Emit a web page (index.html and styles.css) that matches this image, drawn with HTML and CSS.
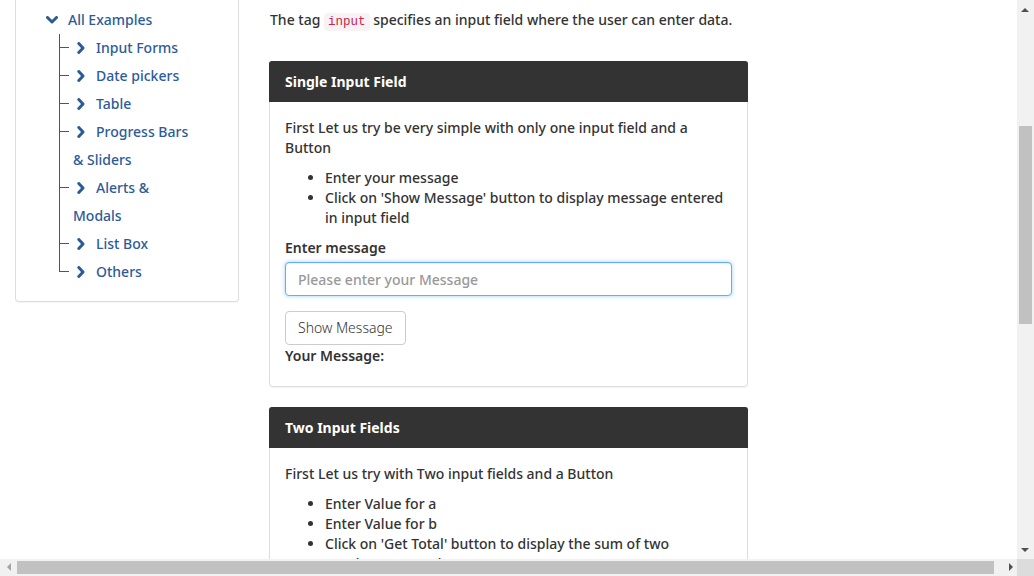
FILE: index.html
```html
<!DOCTYPE html>
<html lang="en">
<head>
<meta charset="utf-8">
<title>Input Form Demo</title>
<link rel="stylesheet" href="styles.css">
</head>
<body>
<div class="page">
  <aside class="sidebar">
    <div class="side-box">
      <div class="tree-root">
        <svg class="chev-down" viewBox="0 0 12 8" width="12" height="8"><polyline points="1.5,1.5 6,6 10.5,1.5" fill="none" stroke="currentColor" stroke-width="3" stroke-linecap="round" stroke-linejoin="round"/></svg>
        <a href="#">All Examples</a>
      </div>
      <ul class="tree">
        <li><svg class="chev" viewBox="0 0 8 12" width="10" height="12"><polyline points="1.8,1.5 6,6 1.8,10.5" fill="none" stroke="currentColor" stroke-width="3" stroke-linecap="round" stroke-linejoin="round"/></svg><a href="#">Input Forms</a></li>
        <li><svg class="chev" viewBox="0 0 8 12" width="10" height="12"><polyline points="1.8,1.5 6,6 1.8,10.5" fill="none" stroke="currentColor" stroke-width="3" stroke-linecap="round" stroke-linejoin="round"/></svg><a href="#">Date pickers</a></li>
        <li><svg class="chev" viewBox="0 0 8 12" width="10" height="12"><polyline points="1.8,1.5 6,6 1.8,10.5" fill="none" stroke="currentColor" stroke-width="3" stroke-linecap="round" stroke-linejoin="round"/></svg><a href="#">Table</a></li>
        <li><svg class="chev" viewBox="0 0 8 12" width="10" height="12"><polyline points="1.8,1.5 6,6 1.8,10.5" fill="none" stroke="currentColor" stroke-width="3" stroke-linecap="round" stroke-linejoin="round"/></svg><a href="#">Progress Bars &amp; Sliders</a></li>
        <li><svg class="chev" viewBox="0 0 8 12" width="10" height="12"><polyline points="1.8,1.5 6,6 1.8,10.5" fill="none" stroke="currentColor" stroke-width="3" stroke-linecap="round" stroke-linejoin="round"/></svg><a href="#">Alerts &amp; Modals</a></li>
        <li><svg class="chev" viewBox="0 0 8 12" width="10" height="12"><polyline points="1.8,1.5 6,6 1.8,10.5" fill="none" stroke="currentColor" stroke-width="3" stroke-linecap="round" stroke-linejoin="round"/></svg><a href="#">List Box</a></li>
        <li><svg class="chev" viewBox="0 0 8 12" width="10" height="12"><polyline points="1.8,1.5 6,6 1.8,10.5" fill="none" stroke="currentColor" stroke-width="3" stroke-linecap="round" stroke-linejoin="round"/></svg><a href="#">Others</a></li>
      </ul>
    </div>
  </aside>

  <main class="main">
    <p class="intro">The tag <code>input</code> specifies an input field where the user can enter data.</p>

    <section class="card">
      <div class="card-head">Single Input Field</div>
      <div class="card-body">
        <p>First Let us try be very simple with only one input field and a Button</p>
        <ul class="steps">
          <li>Enter your message</li>
          <li>Click on 'Show Message' button to display message entered in input field</li>
        </ul>
        <label class="field-label" for="msg">Enter message</label>
        <input id="msg" class="field focus" type="text" placeholder="Please enter your Message">
        <button class="btn" type="button">Show Message</button>
        <div class="result">Your Message:</div>
      </div>
    </section>

    <section class="card">
      <div class="card-head">Two Input Fields</div>
      <div class="card-body">
        <p>First Let us try with Two input fields and a Button</p>
        <ul class="steps">
          <li>Enter Value for a</li>
          <li>Enter Value for b</li>
          <li>Click on 'Get Total' button to display the sum of two numbers entered</li>
        </ul>
        <label class="field-label" for="a">Enter a</label>
        <input id="a" class="field" type="text" placeholder="Enter value">
        <label class="field-label" for="b">Enter b</label>
        <input id="b" class="field" type="text" placeholder="Enter value">
        <button class="btn" type="button">Get Total</button>
        <div class="result">Total a + b =</div>
      </div>
    </section>
  </main>
</div>

<div class="vscroll" aria-hidden="true">
  <span class="arrow up"></span>
  <div class="vtrack"><div class="vthumb"></div></div>
  <span class="arrow down"></span>
</div>
<div class="hscroll" aria-hidden="true">
  <span class="arrow left"></span>
  <div class="htrack"><div class="hthumb"></div></div>
  <span class="arrow right"></span>
</div>
<div class="scroll-corner" aria-hidden="true"></div>
</body>
</html>
```

FILE: styles.css
```css
html, body {
  margin: 0;
  padding: 0;
  background: #fff;
}

body {
  font-family: "Noto Sans", "Open Sans", sans-serif;
  font-size: 14px;
  font-weight: 500;
  color: #333;
  line-height: 20px;
  overflow: hidden;
}

.page {
  display: flex;
  min-width: 1027px;
  padding-bottom: 400px;
}

.sidebar {
  width: 224px;
  padding-left: 15px;
  flex: none;
}

.side-box {
  border: 1px solid #ddd;
  border-top: none;
  border-radius: 0 0 4px 4px;
  padding: 6px 0 15px 0;
  box-shadow: 0 1px 1px rgba(0, 0, 0, 0.04);
}

.side-box a {
  color: #2d5b98;
  text-decoration: none;
}

.tree-root {
  display: flex;
  align-items: center;
  height: 28px;
  padding-left: 30px;
  color: #2d5b98;
}

.chev-down {
  margin-right: 10px;
}

.tree {
  list-style: none;
  margin: 0 0 0 43px;
  padding: 0;
  width: 136px;
}

.tree li {
  position: relative;
  line-height: 28px;
  padding-left: 14px;
  color: #2d5b98;
}

.tree li::before {
  content: "";
  position: absolute;
  left: 0;
  top: 0;
  bottom: 0;
  border-left: 1px solid #2d5b98;
}

.tree li:last-child::before {
  bottom: auto;
  height: 14px;
}

.tree li::after {
  content: "";
  position: absolute;
  left: 0;
  top: 13px;
  width: 10px;
  border-top: 1px solid #2d5b98;
}

.chev {
  display: inline-block;
  vertical-align: -1px;
  margin: 0 10px 0 3px;
}

.main {
  width: 479px;
  margin-left: 30px;
  flex: none;
}

.intro {
  margin: 10px 0 0 1px;
}

code {
  font-family: "Liberation Mono", "DejaVu Sans Mono", monospace;
  font-size: 12.5px;
  color: #c7254e;
  background: #f9f2f4;
  padding: 2px 4px;
  border-radius: 4px;
}

.card {
  border: 1px solid #ddd;
  border-radius: 4px;
  margin-top: 29px;
  box-shadow: 0 1px 1px rgba(0, 0, 0, 0.05);
}

.card + .card {
  margin-top: 20px;
}

.card-head {
  background: #333;
  color: #fff;
  font-weight: 700;
  height: 40px;
  line-height: 40px;
  padding: 0 15px;
  border-radius: 3px 3px 0 0;
  margin: -1px -1px 0 -1px;
  border: 1px solid #333;
  border-bottom: none;
}

.card-body {
  padding: 16px 15px 19px 15px;
}

.card-body p {
  margin: 0;
}

.steps {
  margin: 10px 0;
  padding-left: 40px;
}

.field-label {
  display: block;
  font-weight: 600;
  margin-bottom: 4px;
}

.field {
  display: block;
  box-sizing: border-box;
  width: 100%;
  height: 34px;
  padding: 6px 12px;
  font: inherit;
  color: #555;
  border: 1px solid #ccc;
  border-radius: 4px;
  margin-bottom: 15px;
  outline: none;
}

.field::placeholder {
  color: #999;
}

.field.focus {
  border-color: #66afe9;
  box-shadow: inset 0 1px 1px rgba(0, 0, 0, 0.075), 0 0 4px rgba(102, 175, 233, 0.6);
}

.btn {
  display: block;
  height: 34px;
  padding: 6px 12px;
  font: inherit;
  font-weight: 300;
  color: #333;
  background: #fff;
  border: 1px solid #ccc;
  border-radius: 4px;
}

.result {
  font-weight: 600;
  line-height: 22px;
}

/* Browser-style scrollbars drawn over the page edges */
.vscroll {
  position: fixed;
  top: 0;
  right: 0;
  width: 17px;
  height: 559px;
  background: #f1f1f1;
  display: flex;
  flex-direction: column;
}

.vtrack {
  flex: 1;
  position: relative;
}

.vthumb {
  position: absolute;
  left: 2px;
  right: 2px;
  top: 109px;
  height: 198px;
  background: #c1c1c1;
}

.hscroll {
  position: fixed;
  left: 0;
  bottom: 0;
  width: 1017px;
  height: 17px;
  background: #f1f1f1;
  display: flex;
}

.htrack {
  flex: 1;
  position: relative;
}

.hthumb {
  position: absolute;
  top: 2px;
  bottom: 2px;
  left: 2px;
  right: 8px;
  background: #c1c1c1;
}

.scroll-corner {
  position: fixed;
  right: 0;
  bottom: 0;
  width: 17px;
  height: 17px;
  background: #dcdcdc;
}

.arrow {
  flex: none;
  width: 17px;
  height: 17px;
  position: relative;
}

.arrow::before {
  content: "";
  position: absolute;
  width: 0;
  height: 0;
  border: 4px solid transparent;
}

.arrow.up::before {
  left: 4px;
  top: 4px;
  border-bottom-color: #505050;
}

.arrow.down::before {
  left: 4px;
  top: 6px;
  border-top-color: #505050;
}

.arrow.left::before {
  left: 3px;
  top: 4px;
  border-right-color: #a3a3a3;
}

.arrow.right::before {
  left: 7px;
  top: 4px;
  border-left-color: #505050;
}

.hscroll .arrow {
  width: 15px;
}
```
